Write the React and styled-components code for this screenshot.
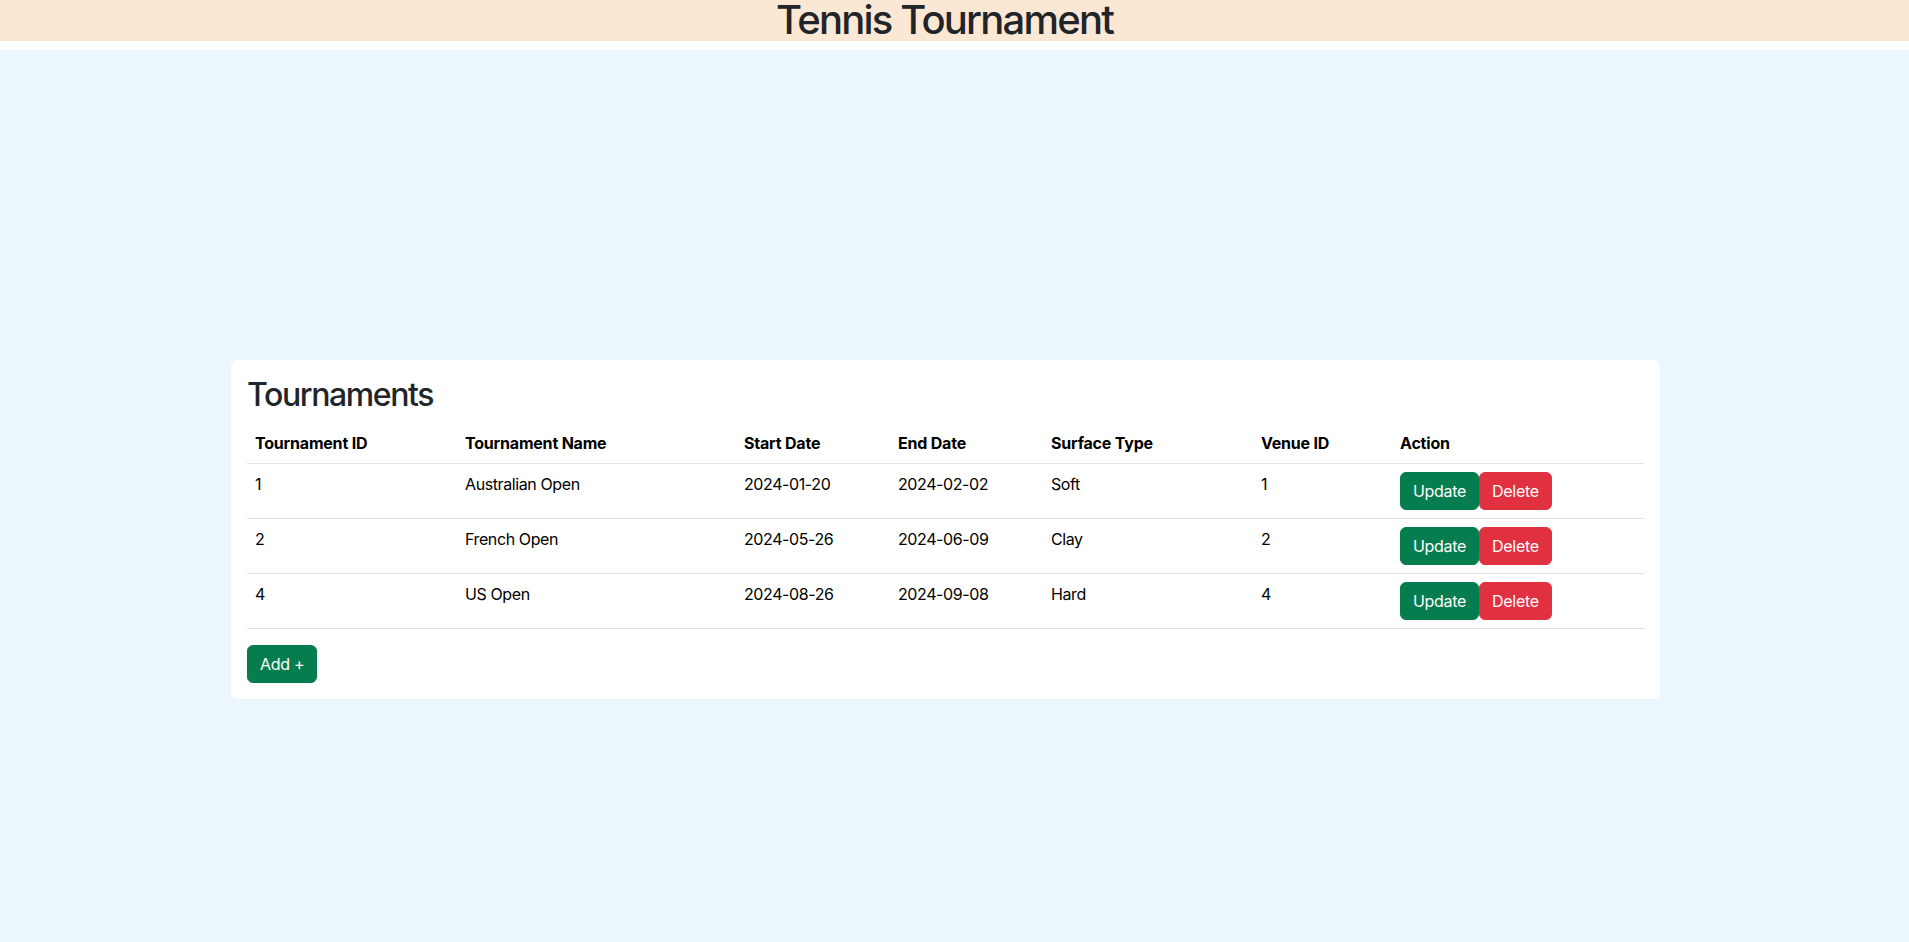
import React from 'react';
import styled, {createGlobalStyle} from 'styled-components';

const GlobalStyle = createGlobalStyle`
  * { box-sizing: border-box; }
  body {
    margin: 0;
    background: #fff;
    color: #212529;
    font-family: Inter, "Noto Sans", "Liberation Sans", sans-serif;
    font-size: 16px;
    line-height: 1.5;
  }
`;

const tournaments = [
	{id: 1, name: 'Australian Open', start: '2024-01-20', end: '2024-02-02', surface: 'Soft', venue: 1},
	{id: 2, name: 'French Open', start: '2024-05-26', end: '2024-06-09', surface: 'Clay', venue: 2},
	{id: 4, name: 'US Open', start: '2024-08-26', end: '2024-09-08', surface: 'Hard', venue: 4},
];

const columns = [
	{label: 'Tournament ID', width: 210},
	{label: 'Tournament Name', width: 279},
	{label: 'Start Date', width: 154},
	{label: 'End Date', width: 153},
	{label: 'Surface Type', width: 210},
	{label: 'Venue ID', width: 139},
	{label: 'Action', width: 252},
];

const Header = styled.header`
  height: 41px;
  background: #fbe8d4;
  text-align: center;
  margin-bottom: 9px;
  padding-right: 20px;

  h1 {
    margin: 0;
    font-size: 40px;
    font-weight: 500;
    line-height: 40px;
    letter-spacing: -1.8px;
  }
`;

const Main = styled.main`
  min-height: 100vh;
  background: #ecf7fd;
  display: flex;
  justify-content: center;
  align-items: center;
  padding: 17px 18px 0 0;
`;

const Card = styled.section`
  width: 1429px;
  background: #fff;
  border-radius: 6px;
  padding: 16px;

  h2 {
    margin: 0 0 8px;
    font-size: 32px;
    font-weight: 500;
    line-height: 1.2;
    letter-spacing: -1.4px;
  }
`;

const Table = styled.table`
  width: 100%;
  table-layout: fixed;
  border-collapse: collapse;
  margin-bottom: 16px;
  color: #000;

  th, td {
    padding: 8px;
    text-align: left;
    border-bottom: 1px solid #dee2e6;
    vertical-align: top;
  }

  th {
    font-weight: 700;
    letter-spacing: -0.2px;
  }

  td {
    letter-spacing: -0.4px;
  }
`;

const Button = styled.button`
  display: inline-block;
  font-family: inherit;
  font-size: 16px;
  line-height: 24px;
  letter-spacing: -0.3px;
  padding: 6px 12px;
  border: 1px solid ${p => p.$color};
  border-radius: 6px;
  background: ${p => p.$color};
  color: #fff;
  cursor: pointer;
`;

const green = '#067d4e';
const red = '#e1303f';

export default function App() {
	return (
		<>
			<GlobalStyle/>
			<Header>
				<h1>Tennis Tournament</h1>
			</Header>
			<Main>
				<Card>
					<h2>Tournaments</h2>
					<Table>
						<colgroup>
							{columns.map((col, index) => <col key={index} style={{width: col.width}}/>)}
						</colgroup>
						<thead>
							<tr>
								{columns.map((col, index) => <th key={index}>{col.label}</th>)}
							</tr>
						</thead>
						<tbody>
							{tournaments.map(t => (
								<tr key={t.id}>
									<td>{t.id}</td>
									<td>{t.name}</td>
									<td>{t.start}</td>
									<td>{t.end}</td>
									<td>{t.surface}</td>
									<td>{t.venue}</td>
									<td>
										<Button $color={green}>Update</Button>
										<Button $color={red}>Delete</Button>
									</td>
								</tr>
							))}
						</tbody>
					</Table>
					<Button $color={green}>Add +</Button>
				</Card>
			</Main>
		</>
	);
}
